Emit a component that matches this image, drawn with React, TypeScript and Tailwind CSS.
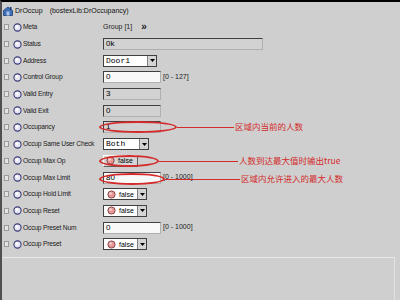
import React from "react";

type Row = {
  label: string;
  kind: "meta" | "text" | "readonly" | "select" | "bool" | "boolButton";
  value?: string;
  width?: number;
  range?: string;
  note?: { text: string; ellipseW: number; lineTo: number; dy?: number };
};

const rows: Row[] = [
  { label: "Meta", kind: "meta" },
  { label: "Status", kind: "readonly", value: "0k", width: 160 },
  { label: "Address", kind: "select", value: "Door1", width: 54 },
  { label: "Control Group", kind: "text", value: "0", width: 58, range: "[0 - 127]" },
  { label: "Valid Entry", kind: "readonly", value: "3", width: 58 },
  { label: "Valid Exit", kind: "readonly", value: "0", width: 58 },
  {
    label: "Occupancy",
    kind: "readonly",
    value: "1",
    width: 58,
    note: { text: "区域内当前的人数", ellipseW: 78, lineTo: 232 },
  },
  { label: "Occup Same User Check", kind: "select", value: "Both", width: 46 },
  {
    label: "Occup Max Op",
    kind: "boolButton",
    value: "false",
    note: { text: "人数到达最大值时输出true", ellipseW: 60, lineTo: 236 },
  },
  {
    label: "Occup Max Limit",
    kind: "text",
    value: "80",
    width: 58,
    range: "[0 - 1000]",
    note: { text: "区域内允许进入的最大人数", ellipseW: 66, lineTo: 238, dy: 2 },
  },
  { label: "Occup Hold Limit", kind: "bool", value: "false" },
  { label: "Occup Reset", kind: "bool", value: "false" },
  { label: "Occup Preset Num", kind: "text", value: "0", width: 58, range: "[0 - 1000]" },
  { label: "Occup Preset", kind: "bool", value: "false" },
];

const mono = { fontFamily: '"Liberation Mono", monospace' };

function Knob() {
  return (
    <svg width="9" height="9" viewBox="0 0 9 9" className="shrink-0">
      <circle cx="4.5" cy="4.5" r="3.6" fill="#e6e6f4" stroke="#3a3a78" strokeWidth="1.1" />
      <circle cx="3.8" cy="3.6" r="1.4" fill="#ffffff" />
    </svg>
  );
}

function RedDot() {
  return (
    <svg width="9" height="9" viewBox="0 0 9 9" className="shrink-0">
      <circle cx="4.5" cy="4.5" r="3.6" fill="#e89a9a" stroke="#7a3a3a" strokeWidth="0.9" />
      <circle cx="3.6" cy="3.5" r="1.2" fill="#f6d6d6" />
    </svg>
  );
}

function DropButton() {
  return (
    <div className="flex h-full w-[9px] items-center justify-center border-l border-[#808080] bg-[#d4d4d4]">
      <svg width="5" height="3" viewBox="0 0 5 3">
        <path d="M0 0 L5 0 L2.5 3 Z" fill="#000" />
      </svg>
    </div>
  );
}

function Value({ row }: { row: Row }) {
  if (row.kind === "meta") {
    return (
      <div className="flex items-center gap-[9px] text-[7px] text-[#222]">
        <span>Group [1]</span>
        <span className="text-[10px] font-bold leading-none">»</span>
      </div>
    );
  }
  if (row.kind === "select") {
    return (
      <div
        className="flex h-[12px] items-center border border-[#404040] bg-white"
        style={{ width: row.width }}
      >
        <span className="flex-1 pl-[2px] text-[8px] leading-none text-black" style={mono}>
          {row.value}
        </span>
        <DropButton />
      </div>
    );
  }
  if (row.kind === "bool") {
    return (
      <div className="flex h-[12px] w-[44px] items-center border border-[#404040] bg-white">
        <div className="flex flex-1 items-center gap-[3px] pl-[3px]">
          <RedDot />
          <span className="text-[7px] leading-none text-black">{row.value}</span>
        </div>
        <DropButton />
      </div>
    );
  }
  if (row.kind === "boolButton") {
    return (
      <div className="flex h-[12px] w-[35px] items-center gap-[3px] border border-t-white border-l-white border-r-[#606060] border-b-[#606060] bg-[#d6d6d6] pl-[2px]">
        <RedDot />
        <span className="text-[7px] leading-none text-black">{row.value}</span>
      </div>
    );
  }
  const readonly = row.kind === "readonly";
  return (
    <div className="flex items-center gap-[2px]">
      <div
        className={`flex h-[12px] items-center border border-t-[#404040] border-l-[#404040] border-r-[#b0b0b0] border-b-[#b0b0b0] pl-[2px] ${
          readonly ? "bg-[#d2d2d2]" : "bg-[#f8f8f8]"
        }`}
        style={{ width: row.width }}
      >
        <span className="text-[8px] leading-none text-black">{row.value}</span>
      </div>
      {row.range && <span className="text-[7px] text-[#222]">{row.range}</span>}
    </div>
  );
}

function Note({ note }: { note: NonNullable<Row["note"]> }) {
  const left = 97;
  const dy = note.dy ?? 0;
  return (
    <div className="pointer-events-none absolute inset-0">
      <div
        className="absolute h-[12px] rounded-[50%] border-2 border-[#d42a2a]"
        style={{ left, width: note.ellipseW, top: 2 + dy }}
      />
      <div
        className="absolute h-px bg-[#d42a2a]"
        style={{ left: left + note.ellipseW, width: note.lineTo - left - note.ellipseW, top: 8 + dy }}
      />
      <span
        className="absolute whitespace-nowrap text-[8.5px] leading-none text-[#d42a2a]"
        style={{
          left: note.lineTo + 1,
          top: 3 + dy,
          fontFamily: '"Noto Sans CJK SC", "Liberation Sans", sans-serif',
        }}
      >
        {note.text}
      </span>
    </div>
  );
}

export default function App() {
  return (
    <div
      className="relative flex h-[300px] w-[400px] flex-col overflow-hidden border-l-2 border-t-2 border-l-[#505050] border-t-black bg-[#cfcfcf]"
      style={{ fontFamily: '"Liberation Sans", Arial, sans-serif' }}
    >
      {/* Title */}
      <div className="flex h-[17px] items-center gap-[2px] pl-[1px] pt-[1px] text-[7px] text-[#111]">
        <svg width="10" height="10" viewBox="0 0 10 10">
          <path d="M0.5 9.5 L0.5 4.5 L5 1 L9.5 4.5 L9.5 9.5 Z" fill="#3f6fb4" stroke="#1e3c78" strokeWidth="0.8" />
          <rect x="3.5" y="5.5" width="3" height="4" fill="#a8c4ec" />
          <rect x="7" y="1" width="1.5" height="3" fill="#1e3c78" />
        </svg>
        <span>DrOccup</span>
        <span className="ml-[5px]">(bostexLib:DrOccupancy)</span>
      </div>

      {/* Property rows */}
      <div className="flex flex-col">
        {rows.map((row) => (
          <div key={row.label} className="relative flex h-[16.7px] items-center">
            <div className="flex w-[101px] shrink-0 items-center">
              <div className="ml-[2px] h-[6px] w-[5px] border border-[#9a9a9a] bg-[#e4e4e4]" />
              <div className="ml-[4px]">
                <Knob />
              </div>
              <span className="ml-[1px] whitespace-nowrap text-[6.7px] tracking-[-0.2px] text-[#1a1a1a]">
                {row.label}
              </span>
            </div>
            <Value row={row} />
            {row.note && <Note note={row.note} />}
          </div>
        ))}
      </div>

      {/* Bottom pane */}
      <div className="mt-[4px] flex flex-1">
        <div className="flex-1 border-t border-[#e8e8e8]" />
        <div className="w-[6px] border-l border-[#e2e2e2]" />
      </div>
    </div>
  );
}
